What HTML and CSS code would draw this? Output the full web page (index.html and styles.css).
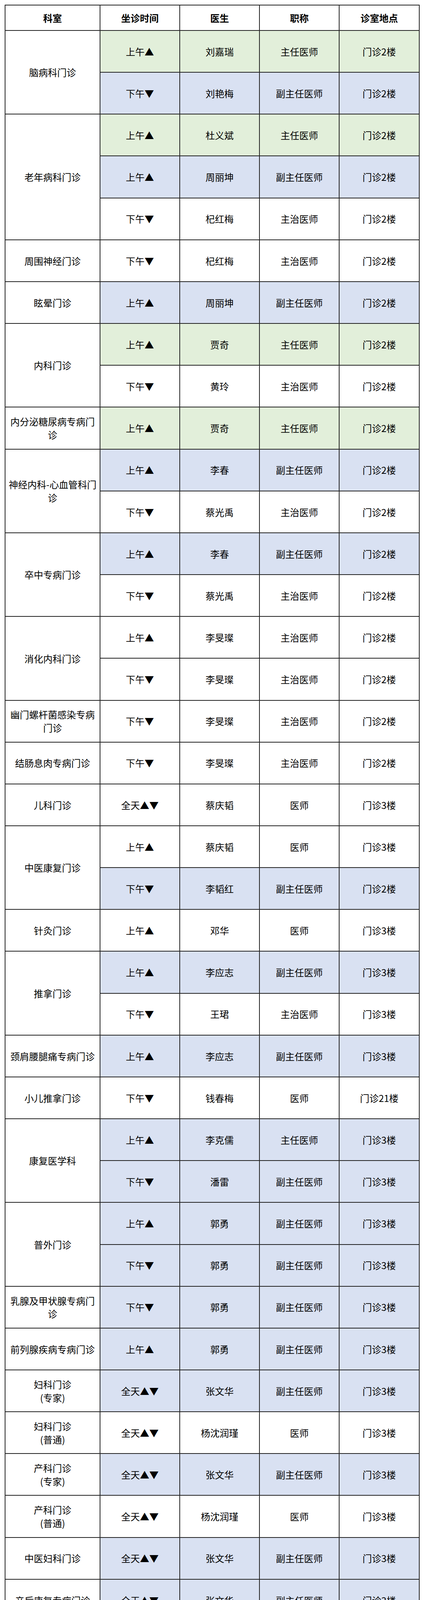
FILE: index.html
```html
<!DOCTYPE html>
<html lang="zh-CN">
<head>
<meta charset="utf-8">
<title>门诊排班表</title>
<link rel="stylesheet" href="styles.css">
</head>
<body>
<div class="schedule" role="table">
  <div class="cell head" role="columnheader">科室</div>
  <div class="cell head" role="columnheader">坐诊时间</div>
  <div class="cell head" role="columnheader">医生</div>
  <div class="cell head" role="columnheader">职称</div>
  <div class="cell head" role="columnheader">诊室地点</div>

  <div class="cell dept span2">脑病科门诊</div>
  <div class="cell g">上午▲</div><div class="cell g">刘嘉瑞</div><div class="cell g">主任医师</div><div class="cell g">门诊2楼</div>
  <div class="cell b">下午▼</div><div class="cell b">刘艳梅</div><div class="cell b">副主任医师</div><div class="cell b">门诊2楼</div>

  <div class="cell dept span3">老年病科门诊</div>
  <div class="cell g">上午▲</div><div class="cell g">杜义斌</div><div class="cell g">主任医师</div><div class="cell g">门诊2楼</div>
  <div class="cell b">上午▲</div><div class="cell b">周丽坤</div><div class="cell b">副主任医师</div><div class="cell b">门诊2楼</div>
  <div class="cell">下午▼</div><div class="cell">杞红梅</div><div class="cell">主治医师</div><div class="cell">门诊2楼</div>

  <div class="cell dept">周围神经门诊</div>
  <div class="cell">下午▼</div><div class="cell">杞红梅</div><div class="cell">主治医师</div><div class="cell">门诊2楼</div>

  <div class="cell dept">眩晕门诊</div>
  <div class="cell b">上午▲</div><div class="cell b">周丽坤</div><div class="cell b">副主任医师</div><div class="cell b">门诊2楼</div>

  <div class="cell dept span2">内科门诊</div>
  <div class="cell g">上午▲</div><div class="cell g">贾奇</div><div class="cell g">主任医师</div><div class="cell g">门诊2楼</div>
  <div class="cell">下午▼</div><div class="cell">黄玲</div><div class="cell">主治医师</div><div class="cell">门诊2楼</div>

  <div class="cell dept">内分泌糖尿病专病门诊</div>
  <div class="cell g">上午▲</div><div class="cell g">贾奇</div><div class="cell g">主任医师</div><div class="cell g">门诊2楼</div>

  <div class="cell dept span2">神经内科-心血管科门诊</div>
  <div class="cell b">上午▲</div><div class="cell b">李春</div><div class="cell b">副主任医师</div><div class="cell b">门诊2楼</div>
  <div class="cell">下午▼</div><div class="cell">蔡光禹</div><div class="cell">主治医师</div><div class="cell">门诊2楼</div>

  <div class="cell dept span2">卒中专病门诊</div>
  <div class="cell b">上午▲</div><div class="cell b">李春</div><div class="cell b">副主任医师</div><div class="cell b">门诊2楼</div>
  <div class="cell">下午▼</div><div class="cell">蔡光禹</div><div class="cell">主治医师</div><div class="cell">门诊2楼</div>

  <div class="cell dept span2">消化内科门诊</div>
  <div class="cell">上午▲</div><div class="cell">李旻璨</div><div class="cell">主治医师</div><div class="cell">门诊2楼</div>
  <div class="cell">下午▼</div><div class="cell">李旻璨</div><div class="cell">主治医师</div><div class="cell">门诊2楼</div>

  <div class="cell dept">幽门螺杆菌感染专病门诊</div>
  <div class="cell">下午▼</div><div class="cell">李旻璨</div><div class="cell">主治医师</div><div class="cell">门诊2楼</div>

  <div class="cell dept">结肠息肉专病门诊</div>
  <div class="cell">下午▼</div><div class="cell">李旻璨</div><div class="cell">主治医师</div><div class="cell">门诊2楼</div>

  <div class="cell dept">儿科门诊</div>
  <div class="cell">全天▲▼</div><div class="cell">蔡庆韬</div><div class="cell">医师</div><div class="cell">门诊3楼</div>

  <div class="cell dept span2">中医康复门诊</div>
  <div class="cell">上午▲</div><div class="cell">蔡庆韬</div><div class="cell">医师</div><div class="cell">门诊3楼</div>
  <div class="cell b">下午▼</div><div class="cell b">李韬红</div><div class="cell b">副主任医师</div><div class="cell b">门诊2楼</div>

  <div class="cell dept">针灸门诊</div>
  <div class="cell">上午▲</div><div class="cell">邓华</div><div class="cell">医师</div><div class="cell">门诊3楼</div>

  <div class="cell dept span2">推拿门诊</div>
  <div class="cell b">上午▲</div><div class="cell b">李应志</div><div class="cell b">副主任医师</div><div class="cell b">门诊3楼</div>
  <div class="cell">下午▼</div><div class="cell">王珺</div><div class="cell">主治医师</div><div class="cell">门诊3楼</div>

  <div class="cell dept">颈肩腰腿痛专病门诊</div>
  <div class="cell b">上午▲</div><div class="cell b">李应志</div><div class="cell b">副主任医师</div><div class="cell b">门诊3楼</div>

  <div class="cell dept">小儿推拿门诊</div>
  <div class="cell">下午▼</div><div class="cell">钱春梅</div><div class="cell">医师</div><div class="cell">门诊21楼</div>

  <div class="cell dept span2">康复医学科</div>
  <div class="cell b">上午▲</div><div class="cell b">李克儒</div><div class="cell b">主任医师</div><div class="cell b">门诊3楼</div>
  <div class="cell b">下午▼</div><div class="cell b">潘雷</div><div class="cell b">副主任医师</div><div class="cell b">门诊3楼</div>

  <div class="cell dept span2">普外门诊</div>
  <div class="cell b">上午▲</div><div class="cell b">郭勇</div><div class="cell b">副主任医师</div><div class="cell b">门诊3楼</div>
  <div class="cell b">下午▼</div><div class="cell b">郭勇</div><div class="cell b">副主任医师</div><div class="cell b">门诊3楼</div>

  <div class="cell dept">乳腺及甲状腺专病门诊</div>
  <div class="cell b">下午▼</div><div class="cell b">郭勇</div><div class="cell b">副主任医师</div><div class="cell b">门诊3楼</div>

  <div class="cell dept">前列腺疾病专病门诊</div>
  <div class="cell b">上午▲</div><div class="cell b">郭勇</div><div class="cell b">副主任医师</div><div class="cell b">门诊3楼</div>

  <div class="cell dept">妇科门诊<br>(专家)</div>
  <div class="cell b">全天▲▼</div><div class="cell b">张文华</div><div class="cell b">副主任医师</div><div class="cell b">门诊3楼</div>

  <div class="cell dept">妇科门诊<br>(普通)</div>
  <div class="cell">全天▲▼</div><div class="cell">杨沈润瑾</div><div class="cell">医师</div><div class="cell">门诊3楼</div>

  <div class="cell dept">产科门诊<br>(专家)</div>
  <div class="cell b">全天▲▼</div><div class="cell b">张文华</div><div class="cell b">副主任医师</div><div class="cell b">门诊3楼</div>

  <div class="cell dept">产科门诊<br>(普通)</div>
  <div class="cell">全天▲▼</div><div class="cell">杨沈润瑾</div><div class="cell">医师</div><div class="cell">门诊3楼</div>

  <div class="cell dept">中医妇科门诊</div>
  <div class="cell b">全天▲▼</div><div class="cell b">张文华</div><div class="cell b">副主任医师</div><div class="cell b">门诊3楼</div>

  <div class="cell dept">产后康复专病门诊</div>
  <div class="cell b">全天▲▼</div><div class="cell b">张文华</div><div class="cell b">副主任医师</div><div class="cell b">门诊3楼</div>

  <div class="cell dept">更年期门诊</div>
  <div class="cell b">全天▲▼</div><div class="cell b">张文华</div><div class="cell b">副主任医师</div><div class="cell b">门诊3楼</div>

  <div class="cell dept">耳鼻喉科</div>
  <div class="cell">全天▲▼</div><div class="cell">李璐璐</div><div class="cell">主治医师</div><div class="cell">门诊3楼</div>

  <div class="cell dept">眼科</div>
  <div class="cell">全天▲▼</div><div class="cell">杨静晖</div><div class="cell">主治医师</div><div class="cell">门诊3楼</div>

  <div class="cell dept span2">皮肤科</div>
  <div class="cell"><span>上午▲午间<svg class="sun" viewBox="0 0 24 24" aria-hidden="true"><path d="M12 0.6 L13.7 4.2 L16.9 1.9 L17.2 5.9 L21.1 5.4 L19.6 9 L23.3 10.4 L20.4 12.9 L23.3 15.4 L19.6 16.8 L21 20.4 L17.2 20 L16.9 23.6 L13.7 21.5 L12 24.6 L10.3 21.5 L7.1 23.6 L6.8 20 L3 20.4 L4.4 16.8 L0.7 15.4 L3.6 12.9 L0.7 10.4 L4.4 9 L2.9 5.4 L6.8 5.9 L7.1 1.9 L10.3 4.2 Z" fill="#f5b800" stroke="#6b4500" stroke-width="0.9" stroke-linejoin="round"/><circle cx="12" cy="12.8" r="6.6" fill="#ffd43a"/><circle cx="9.6" cy="11.3" r="1" fill="#3a2600"/><circle cx="14.4" cy="11.3" r="1" fill="#3a2600"/><path d="M8.9 14.2 Q12 17.2 15.1 14.2" fill="none" stroke="#3a2600" stroke-width="1" stroke-linecap="round"/></svg></span></div><div class="cell">杨榆婷</div><div class="cell">主治医师</div><div class="cell">门诊3楼</div>
  <div class="cell">全天▲▼</div><div class="cell">凡福青</div><div class="cell">医师</div><div class="cell">门诊3楼</div>

  <div class="cell dept span3">口腔科门诊</div>
  <div class="cell">全天▲▼</div><div class="cell">汤爱金</div><div class="cell">主治医师</div><div class="cell">门诊4楼</div>
  <div class="cell">下午▼</div><div class="cell">浦丽仁</div><div class="cell">主治医师</div><div class="cell">门诊4楼</div>
  <div class="cell">上午▲</div><div class="cell">斯那永次</div><div class="cell">医师</div><div class="cell">门诊4楼</div>

  <div class="cell dept span2"><span>骨伤科<span class="dot">·</span>疼痛科</span></div>
  <div class="cell b">上午▲</div><div class="cell b">李军</div><div class="cell b">副主任医师</div><div class="cell b">门诊3楼</div>
  <div class="cell g">下午▼</div><div class="cell g">张运</div><div class="cell g">主任医师</div><div class="cell g">门诊3楼</div>

  <div class="cell dept">骨质疏松专病门诊</div>
  <div class="cell b">上午▲</div><div class="cell b">李军</div><div class="cell b">副主任医师</div><div class="cell b">门诊3楼</div>

  <div class="cell dept span2">治未病中医科门诊</div>
  <div class="cell b">上午▲</div><div class="cell b">王清</div><div class="cell b">副主任医师</div><div class="cell b">门诊2楼</div>
  <div class="cell b">下午▼</div><div class="cell b">张妙兴</div><div class="cell b">副主任医师</div><div class="cell b">门诊2楼</div>

  <div class="cell dept">体重管理门诊</div>
  <div class="cell b">下午▼</div><div class="cell b">张妙兴</div><div class="cell b">副主任医师</div><div class="cell b">门诊2楼</div>

  <div class="cell dept">药物咨询门诊</div>
  <div class="cell b">下午▼</div><div class="cell b">蔡定格</div><div class="cell b">副主任药师</div><div class="cell b">门诊14楼</div>
</div>
</body>
</html>
```
FILE: styles.css
```css
html, body {
  margin: 0;
  padding: 0;
  background: #ffffff;
}

body {
  font-family: "Noto Sans CJK SC", "Noto Sans", sans-serif;
  color: #000000;
  padding: 12px 0 0 12px;
}

/* grid lines are the dark container showing through 2px gaps */
.schedule {
  display: grid;
  width: 1062px;
  box-sizing: border-box;
  grid-template-columns: 241px 202px 202px 202px 203px;
  grid-template-rows: 63px;
  grid-auto-rows: 105.17px;
  gap: 2px;
  padding: 2px;
  background: #232323;
}

.cell {
  display: flex;
  align-items: center;
  justify-content: center;
  text-align: center;
  padding: 0 6px;
  background: #ffffff;
  font-size: 24px;
  line-height: 1.4;
  overflow: hidden;
}

.head {
  font-weight: 700;
}

.g {
  background: #e2efda;
}

.b {
  background: #d9e1f2;
}

.dept {
  grid-column: 1;
}

.span2 {
  grid-row: span 2;
}

.span3 {
  grid-row: span 3;
}

.dot {
  font-family: "Liberation Sans", sans-serif;
  padding: 0 1px;
}

.sun {
  width: 25px;
  height: 25px;
  vertical-align: -5px;
  margin-left: 1px;
}
```
